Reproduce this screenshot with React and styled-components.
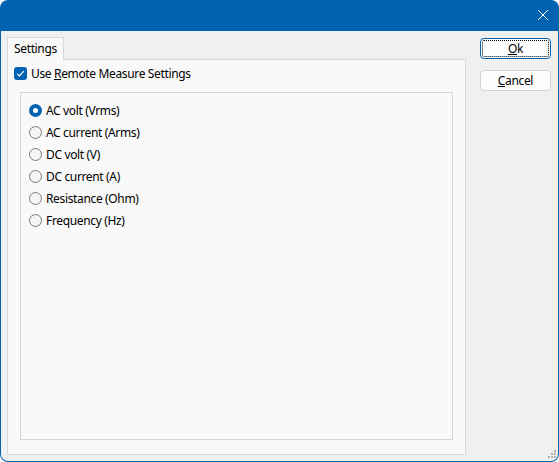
import React from 'react'
import styled, { createGlobalStyle } from 'styled-components'

const Global = createGlobalStyle`
    html, body {
        margin: 0;
        padding: 0;
        background: #ffffff;
    }
    * {
        box-sizing: border-box;
    }
`

const Window = styled.div`
    position: relative;
    width: 559px;
    height: 462px;
    background: #0063b1;
    border-radius: 8px;
    overflow: hidden;
    display: flex;
    flex-direction: column;
    font-family: "Noto Sans", "Open Sans", sans-serif;
    font-size: 12px;
    letter-spacing: -0.35px;
    color: #000;
`

const TitleBar = styled.div`
    height: 31px;
    flex: none;
    display: flex;
    justify-content: flex-end;
    align-items: center;
    padding-right: 10px;
`

const CloseButton = styled.div`
    width: 12px;
    height: 12px;
    display: flex;
    margin-top: -1px;
`

const Client = styled.div`
    flex: 1;
    margin: 0 1px 1px 1px;
    background: #f0f0f0;
    border-radius: 0 0 7px 7px;
    display: flex;
    padding: 6px 0 0 6px;
    gap: 14px;
`

const TabArea = styled.div`
    width: 459px;
    display: flex;
    flex-direction: column;
`

const TabStrip = styled.div`
    display: flex;
    height: 22px;
`

const Tab = styled.div`
    height: 23px;
    padding: 0 6px 0 6px;
    background: #f9f9f9;
    border: 1px solid #d9d9d9;
    border-bottom: none;
    position: relative;
    z-index: 1;
    display: flex;
    align-items: center;
    line-height: 1;
`

const Panel = styled.div`
    height: 396px;
    background: #f9f9f9;
    border: 1px solid #d9d9d9;
    padding: 6px 12px 14px 12px;
    display: flex;
    flex-direction: column;
`

const CheckRow = styled.label`
    display: flex;
    align-items: center;
    gap: 4px;
    margin-left: -6px;
    height: 14px;
`

const CheckBox = styled.span`
    width: 13px;
    height: 13px;
    border-radius: 3px;
    background: #0063b1;
    display: flex;
    align-items: center;
    justify-content: center;
`

const GroupBox = styled.div`
    flex: 1;
    margin-top: 12px;
    border: 1px solid #d5d5d5;
    background: #f9f9f9;
    padding: 6px 0 0 8px;
    display: flex;
    flex-direction: column;
`

const RadioRow = styled.label`
    display: flex;
    align-items: center;
    gap: 4px;
    height: 22px;
`

const RadioCircle = styled.span`
    width: 13px;
    height: 13px;
    border-radius: 50%;
    flex: none;
    display: flex;
    align-items: center;
    justify-content: center;
    background: ${p => (p.$on ? '#0063b1' : '#f5f5f5')};
    border: ${p => (p.$on ? 'none' : '1px solid #7a7a7a')};
    &::after {
        content: '';
        display: ${p => (p.$on ? 'block' : 'none')};
        width: 5px;
        height: 5px;
        border-radius: 50%;
        background: #ffffff;
    }
`

const Buttons = styled.div`
    display: flex;
    flex-direction: column;
    gap: 11px;
    padding-top: 1px;
`

const Button = styled.div`
    position: relative;
    width: 71px;
    height: 21px;
    border: 1px solid ${p => (p.$default ? '#0063b1' : '#d0d0d0')};
    border-radius: 4px;
    background: #fdfdfd;
    display: flex;
    align-items: center;
    justify-content: center;
    line-height: 1;
    &::after {
        content: '';
        display: ${p => (p.$default ? 'block' : 'none')};
        position: absolute;
        inset: 1px;
        border: 1px dotted #000;
        border-radius: 2px;
    }
`

const Grip = styled.svg`
    position: absolute;
    right: 2px;
    bottom: 3px;
`

const radios = [
    'AC volt (Vrms)',
    'AC current (Arms)',
    'DC volt (V)',
    'DC current (A)',
    'Resistance (Ohm)',
    'Frequency (Hz)',
]

export default function App() {
    return (
        <Window>
            <Global />
            <TitleBar>
                <CloseButton>
                    <svg width="12" height="12" viewBox="0 0 12 12">
                        <path d="M1 1 L11 11 M11 1 L1 11" stroke="#fff" strokeWidth="1" fill="none" />
                    </svg>
                </CloseButton>
            </TitleBar>
            <Client>
                <TabArea>
                    <TabStrip>
                        <Tab>Settings</Tab>
                    </TabStrip>
                    <Panel>
                        <CheckRow>
                            <CheckBox>
                                <svg width="9" height="9" viewBox="0 0 9 9">
                                    <path d="M1.2 4.8 L3.4 7 L7.8 2.2" stroke="#fff" strokeWidth="1.2" fill="none" />
                                </svg>
                            </CheckBox>
                            <span>Use <u>R</u>emote Measure Settings</span>
                        </CheckRow>
                        <GroupBox>
                            {radios.map((r, i) => (
                                <RadioRow key={r}>
                                    <RadioCircle $on={i === 0} />
                                    <span>{r}</span>
                                </RadioRow>
                            ))}
                        </GroupBox>
                    </Panel>
                </TabArea>
                <Buttons>
                    <Button $default><span><u>O</u>k</span></Button>
                    <Button><span><u>C</u>ancel</span></Button>
                </Buttons>
            </Client>
            <Grip width="9" height="9" viewBox="0 0 9 9">
                <rect x="6" y="0" width="2" height="2" fill="#b0b0b0" />
                <rect x="3" y="3" width="2" height="2" fill="#b0b0b0" />
                <rect x="6" y="3" width="2" height="2" fill="#b0b0b0" />
                <rect x="0" y="6" width="2" height="2" fill="#b0b0b0" />
                <rect x="3" y="6" width="2" height="2" fill="#b0b0b0" />
                <rect x="6" y="6" width="2" height="2" fill="#b0b0b0" />
            </Grip>
        </Window>
    )
}
